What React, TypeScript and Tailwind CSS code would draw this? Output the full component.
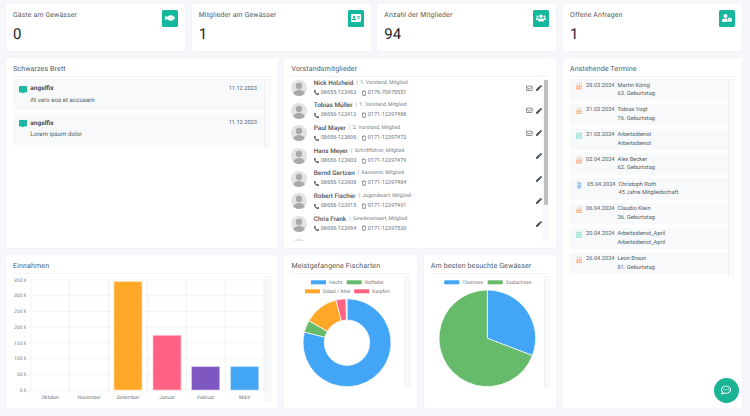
import React from "react";
import { FaFish, FaAddressCard, FaUsers, FaUserClock, FaPhoneAlt, FaRegEnvelope, FaPen, FaBirthdayCake, FaCalendarAlt, FaRegCommentDots } from "react-icons/fa";
import { TbMedal, TbDeviceMobile } from "react-icons/tb";

const stats = [
  { t: "Gäste am Gewässer", v: "0", I: FaFish },
  { t: "Mitglieder am Gewässer", v: "1", I: FaAddressCard },
  { t: "Anzahl der Mitglieder", v: "94", I: FaUsers },
  { t: "Offene Anfragen", v: "1", I: FaUserClock },
];

const members = [
  ["Nick Holzheid", "1. Vorstand, Mitglied", "08655-123963", "0176-70978551", true],
  ["Tobias Müller", "1. Vorstand, Mitglied", "08656-123912", "0171-12397488", true],
  ["Paul Mayer", "2. Vorstand, Mitglied", "08656-123896", "0171-12397472", true],
  ["Hans Meyer", "Schriftführer, Mitglied", "08656-123903", "0171-12397479", false],
  ["Bernd Gertzen", "Kassierer, Mitglied", "08656-123908", "0171-12397484", false],
  ["Robert Fischer", "Jugendwart, Mitglied", "08656-123915", "0171-12397491", false],
  ["Chris Frank", "Gewässerwart, Mitglied", "08656-123954", "0171-12397530", false],
  ["Hannes Müller", "Beisitzer, Mitglied", "", "", false],
] as const;

const events = [
  ["cake", "28.03.2024", "Martin König", "63. Geburtstag"],
  ["cake", "31.03.2024", "Tobias Vogt", "76. Geburtstag"],
  ["cal", "31.03.2024", "Arbeitsdienst", "Arbeitsdienst"],
  ["cake", "02.04.2024", "Alex Becker", "62. Geburtstag"],
  ["medal", "05.04.2024", "Christoph Roth", "45 Jahre Mitgliedschaft"],
  ["cake", "06.04.2024", "Claudio Klein", "36. Geburtstag"],
  ["cal", "20.04.2024", "Arbeitsdienst_April", "Arbeitsdienst_April"],
  ["cake", "26.04.2024", "Leon Braun", "81. Geburtstag"],
] as const;

function Card({ title, className, children }: { title: string; className?: string; children: React.ReactNode }) {
  return (
    <div className={"bg-white rounded-[2px] shadow-[0_0_2px_rgba(0,0,0,0.05)] px-[7px] pt-[6px] flex flex-col min-h-0 overflow-hidden " + (className ?? "")}>
      <div className="text-[7.1px] leading-[9px] text-[#555c63] tracking-[0.1px] pb-[3px] border-b border-[#f3f4f6] shrink-0">{title}</div>
      {children}
    </div>
  );
}

function Avatar() {
  return (
    <svg width="16" height="16" viewBox="0 0 16 16" className="shrink-0">
      <defs><clipPath id="av"><circle cx="8" cy="8" r="8" /></clipPath></defs>
      <circle cx="8" cy="8" r="8" fill="#e2e2e2" />
      <g clipPath="url(#av)" fill="#a9a9a9">
        <ellipse cx="8" cy="6" rx="3.1" ry="3.3" />
        <path d="M1.8 16c0-3.8 2.6-6 6.2-6s6.2 2.2 6.2 6z" />
      </g>
    </svg>
  );
}

function slice(cx: number, cy: number, r: number, ri: number, a0: number, a1: number) {
  const p = (rad: number, a: number) => {
    const t = ((a - 90) * Math.PI) / 180;
    return `${(cx + rad * Math.cos(t)).toFixed(2)} ${(cy + rad * Math.sin(t)).toFixed(2)}`;
  };
  const large = a1 - a0 > 180 ? 1 : 0;
  if (ri === 0) return `M${cx} ${cy}L${p(r, a0)}A${r} ${r} 0 ${large} 1 ${p(r, a1)}Z`;
  return `M${p(ri, a0)}L${p(r, a0)}A${r} ${r} 0 ${large} 1 ${p(r, a1)}L${p(ri, a1)}A${ri} ${ri} 0 ${large} 0 ${p(ri, a0)}Z`;
}

function Legend({ x, y, color, label }: { x: number; y: number; color: string; label: string }) {
  return (
    <g>
      <rect x={x} y={y - 2} width="15" height="4" fill={color} />
      <text x={x + 18} y={y + 1.8} fontSize="5" fill="#777">{label}</text>
    </g>
  );
}

function BarChart() {
  const ys = [280, 295.7, 311.4, 327.1, 342.9, 358.6, 374.3, 390];
  const labels = ["350 €", "300 €", "250 €", "200 €", "150 €", "100 €", "50 €", "0 €"];
  const xs = [30.7, 69.6, 108.5, 147.4, 186.3, 225.2, 264];
  const months = ["Oktober", "November", "Dezember", "Januar", "Februar", "März"];
  const bars = [
    { x: 114, y: 281.7, f: "#ffa726", s: "#ffe0b2" },
    { x: 153, y: 335.3, f: "#ff6384", s: "#ffc1cf" },
    { x: 191.7, y: 366.7, f: "#7e57c2", s: "#d1c4e9" },
    { x: 230.7, y: 366.7, f: "#42a5f5", s: "#bbdefb" },
  ];
  return (
    <svg viewBox="13 276 252 126" width="252" height="126" className="block shrink-0" fontFamily="Roboto, sans-serif">
      {ys.map((y, i) => (
        <g key={y}>
          <line x1="27.5" x2="264" y1={y} y2={y} stroke="#f1f1f1" strokeWidth="0.7" />
          <text x="26.5" y={y + 1.7} fontSize="5" textAnchor="end" fill="#777">{labels[i]}</text>
        </g>
      ))}
      {xs.map((x) => <line key={x} x1={x} x2={x} y1="280" y2="394" stroke="#ececec" strokeWidth="0.7" />)}
      {bars.map((b) => <rect key={b.x} x={b.x} y={b.y} width="28" height={390 - b.y} fill={b.f} stroke={b.s} strokeWidth="0.7" />)}
      {months.map((m, i) => <text key={m} x={xs[i] + 19.5} y="399.2" fontSize="5" textAnchor="middle" fill="#777">{m}</text>)}
    </svg>
  );
}

function Donut() {
  const c = [347, 342.7] as const;
  const segs: [number, number, string][] = [[0, 284, "#42a5f5"], [284, 300, "#66bb6a"], [300, 345.5, "#ffa726"], [345.5, 358.7, "#ff6384"], [358.7, 360, "#d9d9d9"]];
  return (
    <svg viewBox="291 276 113 112" width="113" height="112" className="block shrink-0" fontFamily="Roboto, sans-serif">
      <Legend x={311} y={282.3} color="#42a5f5" label="Hecht" />
      <Legend x={346.7} y={282.3} color="#66bb6a" label="Rotfeder" />
      <Legend x={305} y={291.3} color="#ffa726" label="Döbel / Aitel" />
      <Legend x={354.2} y={291.3} color="#ff6384" label="Karpfen" />
      {segs.map(([a, b, f]) => <path key={a} d={slice(c[0], c[1], 44, 22.7, a, b)} fill={f} stroke="#fff" strokeWidth="0.7" />)}
    </svg>
  );
}

function Pie() {
  return (
    <svg viewBox="430 276 113 112" width="113" height="112" className="block shrink-0" fontFamily="Roboto, sans-serif">
      <Legend x={443.3} y={282.3} color="#42a5f5" label="Thurnsee" />
      <Legend x={486.7} y={282.3} color="#66bb6a" label="Saalachsee" />
      <path d={slice(486.3, 338.3, 48.3, 0, 0, 110.9)} fill="#42a5f5" stroke="#fff" strokeWidth="0.7" />
      <path d={slice(486.3, 338.3, 48.3, 0, 110.9, 360)} fill="#66bb6a" stroke="#fff" strokeWidth="0.7" />
    </svg>
  );
}

function Track({ className }: { className?: string }) {
  return <div className={"w-[7px] shrink-0 bg-[#f8f9fa] border-l border-[#eef0f2] " + (className ?? "")} />;
}

function EventIcon({ kind }: { kind: string }) {
  if (kind === "cake") return <FaBirthdayCake className="text-[#fbbd94] w-[6.5px] h-[7.5px]" />;
  if (kind === "cal") return <FaCalendarAlt className="text-[#a3e4d9] w-[6.5px] h-[7.5px]" />;
  return <TbMedal strokeWidth={3} className="text-[#8ab8f6] w-[8.5px] h-[8.5px] -ml-[0.5px]" />;
}

export default function App() {
  return (
    <div className="relative h-[416px] w-[750px] overflow-hidden bg-[#f5f7fa] pt-[4px] pl-[6px] pr-[8px] pb-[8px] grid grid-cols-4 grid-rows-[47px_1fr] gap-x-[6.67px] gap-y-[6.5px] font-['Roboto',sans-serif] [text-rendering:geometricPrecision] antialiased">
      {stats.map(({ t, v, I }) => (
        <div key={t} className="bg-white rounded-[2px] shadow-[0_0_2px_rgba(0,0,0,0.05)] pl-[7px] pr-[7px] pt-[6px] flex justify-between">
          <div>
            <div className="text-[6.9px] leading-[10px] text-[#555c63] tracking-[0.15px]">{t}</div>
            <div className="text-[15px] leading-[18px] mt-[5px] text-[#1f2328]">{v}</div>
          </div>
          <div className="w-[16px] h-[16.5px] rounded-[1.5px] bg-[#15b79e] flex items-center justify-center text-white text-[10px]"><I /></div>
        </div>
      ))}

      <div className="col-span-3 grid grid-cols-4 grid-rows-[190.5px_153.5px] gap-x-[6.67px] gap-y-[6.5px] min-h-0">
        <Card title="Schwarzes Brett" className="col-span-2">
          <div className="flex mt-[2.5px] h-[69px]">
            <div className="flex-1 flex flex-col gap-[3.2px]">
              {["At vero eos et accusam", "Lorem ipsum dolor"].map((m, i) => (
                <div key={i} className="h-[31.3px] bg-[#f8f9fa] pl-[6px] pr-[7px] flex text-[#555c63]">
                  <svg viewBox="0 0 8 8" width="8" height="8" className="mt-[6.5px] shrink-0"><path d="M.7 0h6.6c.4 0 .7.3.7.7v5c0 .4-.3.7-.7.7H5L4 7.6 3 6.4H.7c-.4 0-.7-.3-.7-.7v-5C0 .3.3 0 .7 0z" fill="#1cb8a4" /></svg>
                  <div className="flex-1 ml-[3.3px] pt-[6.5px]">
                    <div className="flex justify-between items-center h-[7px]">
                      <span className="text-[6.5px] font-bold text-[#495057]">angelfix</span>
                      <span className="text-[5.6px]">11.12.2023</span>
                    </div>
                    <div className="text-[6.2px] leading-[8px] mt-[3.5px]">{m}</div>
                  </div>
                </div>
              ))}
            </div>
            <Track />
          </div>
        </Card>

        <Card title="Vorstandsmitglieder" className="col-span-2">
          <div className="flex mt-[2.5px] h-[162px] overflow-hidden">
            <div className="flex-1 overflow-hidden">
              <div className="-mt-[2.3px]">
                {members.map(([n, role, ph, mob, mail]) => (
                  <div key={n} className="h-[22.67px] flex items-center">
                    <Avatar />
                    <div className="ml-[6.3px] flex-1">
                      <div className="flex items-center h-[9px] whitespace-nowrap">
                        <span className="text-[6.4px] font-medium text-[#495057]">{n}</span>
                        <span className="text-[5.2px] text-[#7b8288] ml-[3px]">|&nbsp; {role}</span>
                      </div>
                      {ph && (
                        <div className="flex items-center h-[9px] pt-[0.5px] text-[5.5px] text-[#6c757d] whitespace-nowrap">
                          <FaPhoneAlt className="w-[5px] h-[5px] text-[#495057] mr-[2px]" />
                          <span className="w-[40.5px]">{ph}</span>
                          <TbDeviceMobile className="w-[6px] h-[6.5px] text-[#495057] mr-[0.5px]" />
                          <span>{mob}</span>
                        </div>
                      )}
                    </div>
                    {mail && <FaRegEnvelope className="w-[6.5px] h-[6.5px] text-[#6c757d] mr-[3.5px]" />}
                    <FaPen className="w-[6px] h-[6px] text-[#495057]" />
                  </div>
                ))}
              </div>
            </div>
            <div className="w-[7px] shrink-0 bg-[#f8f9fa] pt-[1px] pl-[1.5px]">
              <div className="w-[4px] h-[125px] bg-[#c1c1c1]" />
            </div>
          </div>
        </Card>

        <Card title="Einnahmen" className="col-span-2">
          <div className="flex mt-[2.5px] h-[126px]">
            <BarChart />
            <Track />
          </div>
        </Card>

        <Card title="Meistgefangene Fischarten">
          <div className="flex mt-[2.5px] h-[112px]">
            <Donut />
            <Track />
          </div>
        </Card>

        <Card title="Am besten besuchte Gewässer">
          <div className="flex mt-[2.5px] h-[112px]">
            <Pie />
            <Track />
          </div>
        </Card>
      </div>

      <Card title="Anstehende Termine" className="min-h-0">
        <div className="flex mt-[2.5px] h-[198px]">
          <div className="flex-1 flex flex-col gap-[3.3px]">
            {events.map(([k, d, n, s], i) => (
              <div key={i} className="h-[21.5px] bg-[#f8f9fa] pl-[6px] pt-[2.5px] flex text-[#555c63] text-[5.7px] leading-[8.5px] whitespace-nowrap">
                <div className={"shrink-0 pt-[0.5px] " + (k === "medal" ? "w-[11px]" : "w-[10px]")}><EventIcon kind={k} /></div>
                <div className="w-[31.5px] shrink-0">{d}</div>
                <div>
                  <div>{n}</div>
                  <div>{s}</div>
                </div>
              </div>
            ))}
          </div>
          <Track />
        </div>
      </Card>

      <div className="absolute left-[713.5px] top-[377.5px] w-[25px] h-[25px] rounded-full bg-[#1ab394] flex items-center justify-center text-white text-[10px]">
        <FaRegCommentDots />
      </div>
    </div>
  );
}
